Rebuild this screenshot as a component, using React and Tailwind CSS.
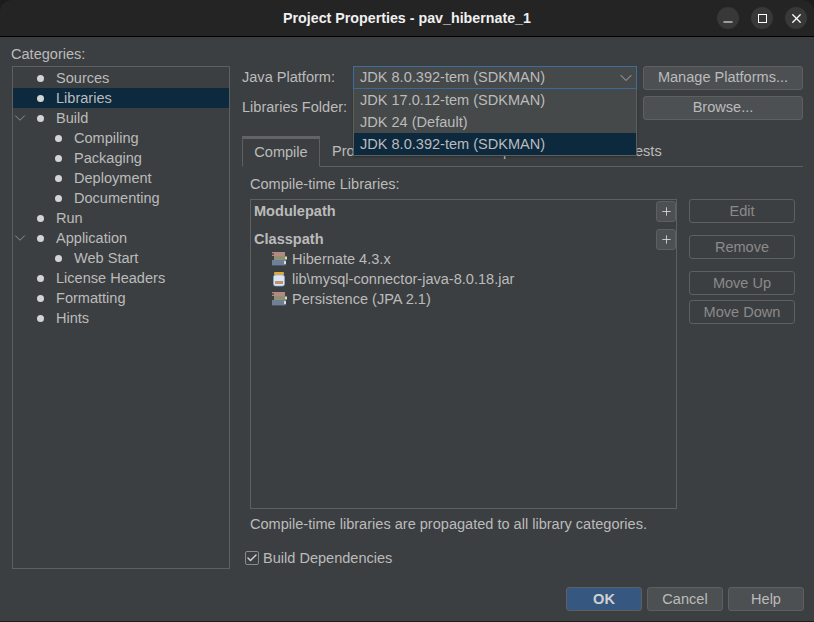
import { Check, ChevronDown, Minus, Plus, X } from 'lucide-react'

const categories = [
  { label: 'Sources', depth: 0 },
  { label: 'Libraries', depth: 0, selected: true },
  { label: 'Build', depth: 0, open: true },
  { label: 'Compiling', depth: 1 },
  { label: 'Packaging', depth: 1 },
  { label: 'Deployment', depth: 1 },
  { label: 'Documenting', depth: 1 },
  { label: 'Run', depth: 0 },
  { label: 'Application', depth: 0, open: true },
  { label: 'Web Start', depth: 1 },
  { label: 'License Headers', depth: 0 },
  { label: 'Formatting', depth: 0 },
  { label: 'Hints', depth: 0 },
]

function TreeRow({ item }) {
  return (
    <div className={`relative flex h-5 items-center ${item.selected ? 'bg-[#0d293e]' : ''}`}>
      {item.open && (
        <ChevronDown size={18} strokeWidth={1} className="absolute left-[-2px] top-[1px] text-[#a8a8a8]" />
      )}
      <span className={`h-[7px] w-[7px] rounded-full bg-[#d4d4d4] ${item.depth ? 'ml-[42px]' : 'ml-[24px]'}`} />
      <span className="ml-[12px]">{item.label}</span>
    </div>
  )
}

function Button({ children, className = '' }) {
  return (
    <button className={`h-6 rounded-[3px] border border-[#5e6060] bg-[#4c5052] text-center ${className}`}>
      {children}
    </button>
  )
}

function SideButton({ children, className = '' }) {
  return (
    <button className={`h-6 w-[106px] rounded-[3px] border border-[#5e6060] text-center text-[#8a8a8a] ${className}`}>
      {children}
    </button>
  )
}

function BooksIcon() {
  return (
    <svg width="16" height="16" viewBox="0 0 16 16" className="shrink-0">
      <rect x="1" y="1" width="13" height="4" fill="#b28a84" />
      <rect x="1" y="2" width="2" height="2" fill="#6e5450" />
      <rect x="3" y="5" width="13" height="4" fill="#8f8f72" />
      <rect x="14" y="6" width="2" height="2" fill="#d8d8d0" />
      <rect x="1" y="9" width="14" height="5" fill="#6f7f95" />
      <rect x="13" y="10" width="2" height="3" fill="#d8dce0" />
      <rect x="1" y="14" width="13" height="1" fill="#4c5666" />
    </svg>
  )
}

function JarIcon() {
  return (
    <svg width="16" height="16" viewBox="0 0 16 16" className="shrink-0">
      <rect x="3" y="1" width="10" height="3" rx="1" fill="#e0a93a" />
      <rect x="2.5" y="4" width="11" height="11" rx="2" fill="#d9e6f5" stroke="#8fa9c8" strokeWidth="0.7" />
      <rect x="4" y="10" width="8" height="3" fill="#c08e70" />
    </svg>
  )
}

function LibraryRow({ icon, label }) {
  return (
    <div className="ml-[17px] flex h-5 items-center gap-[5px]">
      {icon}
      <span>{label}</span>
    </div>
  )
}

function WindowButton({ children }) {
  return (
    <span className="flex h-[22px] w-[22px] items-center justify-center rounded-full bg-[#383838] text-white">
      {children}
    </span>
  )
}

export default function App() {
  return (
    <div className="flex h-[622px] w-[814px] flex-col overflow-hidden bg-[#1c1c1c] font-['Liberation_Sans',sans-serif] text-[14.55px] leading-5 text-[#bbbbbb]">
      {/* Title bar */}
      <div className="relative flex h-[37px] shrink-0 items-center justify-center rounded-t-[12px] border-b border-black bg-[#242424] text-[14.25px] font-bold text-[#f0f0f0]">
        Project Properties - pav_hibernate_1
        <div className="absolute right-[7px] top-[7px] flex gap-[12px]">
          <WindowButton>
            <Minus size={14} strokeWidth={2} className="translate-y-[4px]" />
          </WindowButton>
          <WindowButton>
            <span className="h-[9px] w-[9px] border-[1.5px] border-white" />
          </WindowButton>
          <WindowButton>
            <X size={15} strokeWidth={2} />
          </WindowButton>
        </div>
      </div>

      <div className="flex h-[584px] shrink-0 bg-[#3c3f41] pl-[11px] pt-[7px]">
        {/* Categories */}
        <div className="flex w-[220px] shrink-0 flex-col">
          <div className="h-[22px] shrink-0">Categories:</div>
          <div className="ml-[1px] h-[503px] w-[218px] border border-[#5e6060] pt-[1px]">
            {categories.map((item) => (
              <TreeRow key={item.label} item={item} />
            ))}
          </div>
        </div>

        {/* Main panel */}
        <div className="ml-[11px] flex w-[562px] shrink-0 flex-col">
          <div className="relative mt-[22px]">
            <div className="flex items-start">
              <span className="w-[111px] pt-[1px]">Java Platform:</span>
              <div className="flex h-[23px] w-[284px] items-center justify-between border border-[#3e6d9c] bg-[#45494a] pb-[2px] pl-[6px]">
                <span>JDK 8.0.392-tem (SDKMAN)</span>
                <ChevronDown size={20} strokeWidth={1} className="translate-y-[1px] text-[#c0c0c0]" />
              </div>
              <Button className="ml-[6px] w-[160px] pb-[2px]">Manage Platforms...</Button>
            </div>
            <div className="mt-[6px] flex items-start">
              <span className="w-[111px] pt-[1px]">Libraries Folder:</span>
              <div className="w-[284px]" />
              <Button className="ml-[6px] w-[160px] pb-[2px]">Browse...</Button>
            </div>

            {/* Combo popup */}
            <div className="absolute left-[111px] top-[23px] z-10 w-[284px] border-x border-b border-[#5e6060] bg-[#45494a] shadow-[0_1px_2px_rgba(0,0,0,0.3)]">
              <div className="flex h-[22px] items-center pl-[6px]">JDK 17.0.12-tem (SDKMAN)</div>
              <div className="flex h-[22px] items-center pl-[6px]">JDK 24 (Default)</div>
              <div className="flex h-[22px] items-center bg-[#0d293e] pl-[6px]">JDK 8.0.392-tem (SDKMAN)</div>
            </div>
          </div>

          {/* Tabs */}
          <div className="mr-[1px] mt-[16px] flex h-[31px] shrink-0 border-b border-[#5e6060]">
            <div className="flex h-[31px] w-[78px] items-center justify-center border-x border-b border-t-[3px] border-x-[#5e6060] border-b-[#3c3f41] border-t-[#646464] bg-[#3c3f41] pb-[2px]">
              Compile
            </div>
            <div className="flex items-center px-[12px]">Processor</div>
            <div className="flex items-center px-[12px]">Run</div>
            <div className="flex items-center pl-[12px] pr-[22px]">Compile Tests</div>
            <div className="flex items-center px-[12px]">Run Tests</div>
          </div>

          <div className="ml-[8px] mt-[7px] h-5">Compile-time Libraries:</div>

          <div className="ml-[8px] mt-[5px] flex items-start">
            <div className="relative h-[310px] w-[427px] border border-[#5e6060] pl-[3px] pt-[1px]">
              <div className="flex h-5 items-center font-bold">Modulepath</div>
              <div className="mt-[8px] flex h-5 items-center font-bold">Classpath</div>
              <LibraryRow icon={<BooksIcon />} label="Hibernate 4.3.x" />
              <LibraryRow icon={<JarIcon />} label="lib\mysql-connector-java-8.0.18.jar" />
              <LibraryRow icon={<BooksIcon />} label="Persistence (JPA 2.1)" />
              <span className="absolute right-0 top-[1px] flex h-[21px] w-5 items-center justify-center rounded-[3px] border border-[#5e6060] bg-[#4c5052] text-[#e0e0e0]">
                <Plus size={13} strokeWidth={1.5} />
              </span>
              <span className="absolute right-0 top-[29px] flex h-[21px] w-5 items-center justify-center rounded-[3px] border border-[#5e6060] bg-[#4c5052] text-[#e0e0e0]">
                <Plus size={13} strokeWidth={1.5} />
              </span>
            </div>
            <div className="ml-[12px] flex flex-col">
              <SideButton>Edit</SideButton>
              <SideButton className="mt-[12px]">Remove</SideButton>
              <SideButton className="mt-[12px]">Move Up</SideButton>
              <SideButton className="mt-[5px]">Move Down</SideButton>
            </div>
          </div>

          <div className="ml-[8px] mt-[5px] h-5">Compile-time libraries are propagated to all library categories.</div>

          <div className="ml-[3px] mt-[14px] flex h-5 items-center">
            <span className="flex h-[14px] w-[14px] items-center justify-center rounded-[2px] border border-[#8a8a8a] text-[#d0d0d0]">
              <Check size={12} strokeWidth={3} />
            </span>
            <span className="ml-[4px]">Build Dependencies</span>
          </div>

          {/* Footer */}
          <div className="mt-[19px] flex justify-end gap-[5px]">
            <Button className="w-[76px] border-[#4a78a5] bg-[#365880] font-bold text-[#d0d0d0]">OK</Button>
            <Button className="w-[76px]">Cancel</Button>
            <Button className="w-[76px]">Help</Button>
          </div>
        </div>
      </div>
    </div>
  )
}
